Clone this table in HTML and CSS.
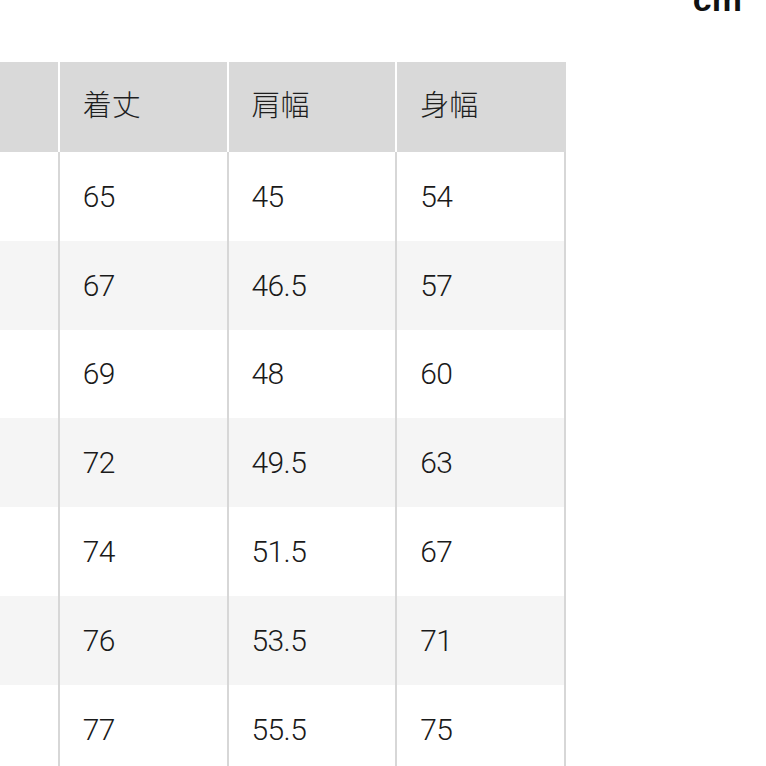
FILE: index.html
```html
<!DOCTYPE html>
<html lang="ja">
<head>
<meta charset="utf-8">
<link rel="stylesheet" href="styles.css">
</head>
<body>
<div class="unit">cm</div>
<table class="size-table">
  <thead>
    <tr><th>サイズ</th><th>着丈</th><th>肩幅</th><th>身幅</th></tr>
  </thead>
  <tbody>
    <tr><td>XS</td><td>65</td><td>45</td><td>54</td></tr>
    <tr><td>S</td><td>67</td><td>46.5</td><td>57</td></tr>
    <tr><td>M</td><td>69</td><td>48</td><td>60</td></tr>
    <tr><td>L</td><td>72</td><td>49.5</td><td>63</td></tr>
    <tr><td>XL</td><td>74</td><td>51.5</td><td>67</td></tr>
    <tr><td>XXL</td><td>76</td><td>53.5</td><td>71</td></tr>
    <tr><td>3XL</td><td>77</td><td>55.5</td><td>75</td></tr>
  </tbody>
</table>
</body>
</html>
```
FILE: styles.css
```css
html, body {
  margin: 0;
  padding: 0;
  background: #ffffff;
  overflow: hidden;
}
body {
  width: 766px;
  height: 766px;
  font-family: Roboto, "Noto Sans CJK JP", sans-serif;
  color: #222222;
}
.unit {
  margin-top: -18px;
  height: 34px;
  line-height: 34px;
  font-family: "Liberation Sans", Arial, sans-serif;
  font-weight: bold;
  font-size: 34px;
  text-align: right;
  padding-right: 24px;
  color: #111111;
}
.size-table {
  width: 675px;
  margin-top: 46px;
  margin-left: -109px;
  border-collapse: separate;
  border-spacing: 0;
  table-layout: fixed;
}
.size-table th,
.size-table td {
  width: 168px;
  box-sizing: border-box;
  padding: 0 0 0 23px;
  text-align: left;
  vertical-align: middle;
  white-space: nowrap;
}
.size-table th {
  height: 90px;
  padding-bottom: 8px;
  background: #d9d9d9;
  border-right: 2px solid #ffffff;
  font-family: "Noto Sans CJK JP", sans-serif;
  font-weight: 300;
  font-size: 29px;
  color: #1e1e1e;
}
.size-table th:last-child {
  border-right-color: #d9d9d9;
}
.size-table td {
  height: 88.8px;
  border-right: 2px solid #d7d7d7;
  font-size: 30px;
  letter-spacing: -0.6px;
  font-weight: 300;
  color: #1a1a1a;
}
.size-table tbody tr:nth-child(even) td {
  background: #f5f5f5;
}
```
